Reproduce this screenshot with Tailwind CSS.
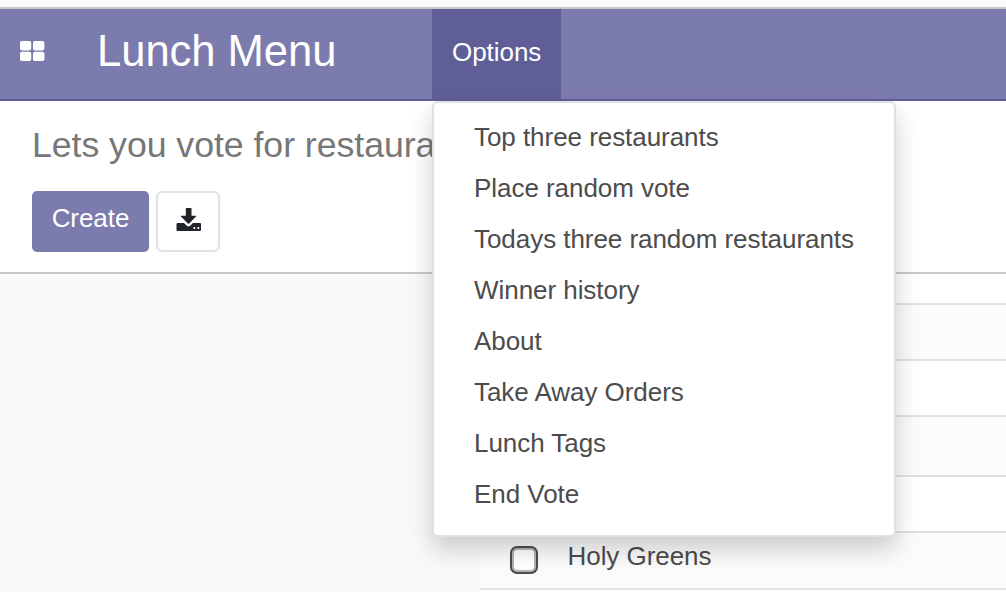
<!DOCTYPE html>
<html lang="en">
<head>
<meta charset="utf-8">
<title>Lunch Menu</title>
<script src="https://cdn.jsdelivr.net/npm/@tailwindcss/browser@4"></script>
</head>
<body class="w-[1006px] h-[592px] overflow-hidden bg-[#f9f9f9] text-[26px] tracking-[-0.05px] text-[#4c4c4c] font-['Liberation_Sans',Arial,sans-serif]">
<div class="flex flex-col h-full">
  <div class="h-[9px] shrink-0 bg-[#fafafa] border-b-2 border-[#c8c8c8]"></div>
  <nav class="flex h-[92px] shrink-0 bg-[#7c7bad] border-b-2 border-[#5f5e97] text-white">
    <div class="flex w-[432px] items-center pl-5">
      <svg class="w-[25px] h-5 mb-[7px]" viewBox="0 0 25 20" fill="#fff"><rect x="0" y="0" width="11.2" height="9.4" rx="1.8"/><rect x="13" y="0" width="11.4" height="9.4" rx="1.8"/><rect x="0" y="10.800" width="11.2" height="9.200" rx="1.8"/><rect x="13" y="10.800" width="11.4" height="9.200" rx="1.8"/></svg>
      <h1 class="ml-[52px] mb-[7px] text-[43.6px] leading-[50px] whitespace-nowrap">Lunch Menu</h1>
    </div>
    <div class="relative w-[129px] h-[92px] bg-[#5f5e97] pl-5 pt-[18px] leading-[51px]">Options
      <ul class="absolute z-10 left-0 top-[92px] w-[464px] h-[436px] bg-white text-[#4c4c4c] border-2 border-[#dee2e6] rounded-[6px] pl-10 pt-[9px] leading-[51px] whitespace-nowrap shadow-[0_12px_24px_rgba(0,0,0,0.19)]">
        <li>Top three restaurants</li>
        <li>Place random vote</li>
        <li>Todays three random restaurants</li>
        <li>Winner history</li>
        <li>About</li>
        <li>Take Away Orders</li>
        <li>Lunch Tags</li>
        <li>End Vote</li>
      </ul>
    </div>
  </nav>
  <header class="h-[173px] shrink-0 bg-white border-b-2 border-[#c9c9c9] px-8 pt-[20px]">
    <h2 class="h-[70px] text-[35.7px] leading-[48px] text-[#777] whitespace-nowrap">Lets you vote for restaurants</h2>
    <div class="flex gap-[7px]">
      <button class="w-[117px] h-[61px] pb-[7px] rounded-[5px] bg-[#7c7bad] text-white">Create</button>
      <button class="w-[64px] h-[61px] rounded-[6px] border-2 border-[#dee2e6] flex items-center justify-center pl-[2px] pb-[4px]">
        <svg class="w-[26px] h-[24px]" viewBox="0 0 26 24"><path fill="#212529" d="M10.2 0h4.6q.7 0 .7.7v7h4.2q.8 0 .3.8l-6.800 7q-.7.7-1.400 0l-6.800-7q-.5-.8.3-.8h4.500v-7q0-.7.7-.7z"/><path fill="#212529" d="M1.500 15h6.500l2.800 2.700q1.700 1.500 3.400 0l2.800-2.700h7q1 0 1 1v6q0 1-1 1h-22.500q-1 0-1-1v-6q0-1 1-1z"/><path fill="#fff" d="M17.500 19h1.700v2h-1.700zM21.500 19h1.700v2h-1.700z"/></svg>
      </button>
    </div>
  </header>
  <main class="ml-[480px] flex-1 bg-white">
    <div class="h-[31px] border-b-2 border-[#dee2e6]"></div>
    <div class="h-[56px] border-b-2 border-[#dee2e6] bg-[#fbfbfc]"></div>
    <div class="h-[56px] border-b-2 border-[#dee2e6]"></div>
    <div class="h-[60px] border-b-2 border-[#dee2e6] bg-[#fbfbfc]"></div>
    <div class="h-[56px] border-b-2 border-[#dee2e6]"></div>
    <div class="flex h-[57px] border-b-2 border-[#dee2e6] bg-[#fbfbfc] pl-[30px]">
      <div class="mt-[13px] size-[28px] rounded-[7px] border-2 border-[#4c4c4c] bg-[#adb5bd] p-[2px]"><div class="size-full rounded-[3px] bg-white"></div></div>
      <div class="ml-[29.5px] leading-[47px]">Holy Greens</div>
    </div>
  </main>
</div>
</body>
</html>
